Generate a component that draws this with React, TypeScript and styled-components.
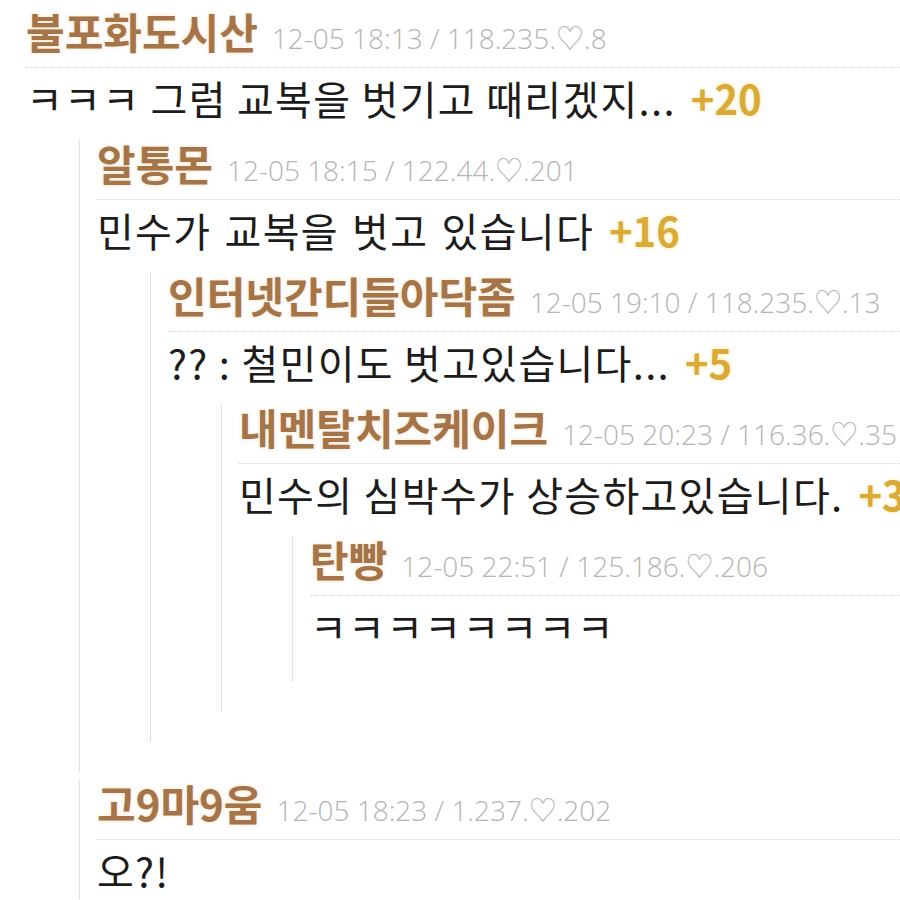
import styled, { createGlobalStyle } from 'styled-components'

const GlobalStyle = createGlobalStyle`
    html, body {
        margin: 0;
        padding: 0;
        background: #ffffff;
        overflow: hidden;
    }
    body {
        font-family: "Noto Sans CJK KR", "Noto Sans", sans-serif;
    }
`

const Page = styled.div`
    width: 900px;
    height: 900px;
    overflow: hidden;
    box-sizing: border-box;
    padding: 9px 0 0 26px;
`

const Thread = styled.div`
    display: flex;
    flex-direction: column;
`

const Reply = styled.div`
    display: flex;
    flex-direction: column;
    margin-left: 53px;
    padding: 1px 0 30px 17px;
    border-left: 1px dotted #c9c9c9;
`

const ReplyList = styled.div`
    display: flex;
    flex-direction: column;
    gap: 9px;
    margin-top: 17px;
`

const Header = styled.div`
    display: flex;
    align-items: baseline;
    gap: 14px;
    height: 50px;
    line-height: 44px;
    white-space: nowrap;
`

const Name = styled.span`
    font-size: 42px;
    font-weight: 700;
    color: #a57549;
    text-shadow: 0 0 4px rgba(240, 180, 110, 0.35);
`

const Meta = styled.span`
    font-family: "Open Sans", "Noto Sans", "Noto Sans CJK KR", sans-serif;
    font-size: 28px;
    font-weight: 300;
    color: #b4b4b4;
`

const Divider = styled.div`
    margin-top: 8px;
    border-top: 1px dotted #d3d3d3;
`

const Body = styled.div<{ $wordGap?: number }>`
    margin-top: 7px;
    height: 48px;
    line-height: 46px;
    font-size: 40px;
    letter-spacing: 1.3px;
    word-spacing: ${(p) => p.$wordGap ?? 0}px;
    color: #1c1c1c;
    white-space: nowrap;
`

const Score = styled.span`
    margin-left: 15px;
    font-size: 40px;
    font-weight: 700;
    letter-spacing: 0;
    word-spacing: 0;
    color: #d9aa36;
    text-shadow: 0 0 4px rgba(250, 200, 60, 0.45);
`

type CommentData = {
    name: string
    meta: string
    body: string
    wordGap?: number
    score?: number
    replies?: CommentData[]
}

const data: CommentData = {
    name: '불포화도시산',
    meta: '12-05 18:13 / 118.235.♡.8',
    body: 'ㅋㅋㅋ 그럼 교복을 벗기고 때리겠지...',
    score: 20,
    replies: [
        {
            name: '알통몬',
            meta: '12-05 18:15 / 122.44.♡.201',
            body: '민수가 교복을 벗고 있습니다',
            wordGap: 3,
            score: 16,
            replies: [
                {
                    name: '인터넷간디들아닥좀',
                    meta: '12-05 19:10 / 118.235.♡.13',
                    body: '?? : 철민이도 벗고있습니다...',
                    score: 5,
                    replies: [
                        {
                            name: '내멘탈치즈케이크',
                            meta: '12-05 20:23 / 116.36.♡.35',
                            body: '민수의 심박수가 상승하고있습니다.',
                            score: 3,
                            replies: [
                                {
                                    name: '탄빵',
                                    meta: '12-05 22:51 / 125.186.♡.206',
                                    body: 'ㅋㅋㅋㅋㅋㅋㅋㅋ',
                                },
                            ],
                        },
                    ],
                },
            ],
        },
        {
            name: '고9마9움',
            meta: '12-05 18:23 / 1.237.♡.202',
            body: '오?!',
        },
    ],
}

const CommentContent = ({ comment }: { comment: CommentData }) => (
    <>
        <Header>
            <Name>{comment.name}</Name>
            <Meta>{comment.meta}</Meta>
        </Header>
        <Divider />
        <Body $wordGap={comment.wordGap}>
            {comment.body}
            {comment.score ? <Score>+{comment.score}</Score> : null}
        </Body>
        {comment.replies && (
            <ReplyList>
                {comment.replies.map((r) => (
                    <Reply key={r.name}>
                        <CommentContent comment={r} />
                    </Reply>
                ))}
            </ReplyList>
        )}
    </>
)

const App = () => {
    return (
        <Page>
            <GlobalStyle />
            <Thread>
                <CommentContent comment={data} />
            </Thread>
        </Page>
    )
}

export default App
